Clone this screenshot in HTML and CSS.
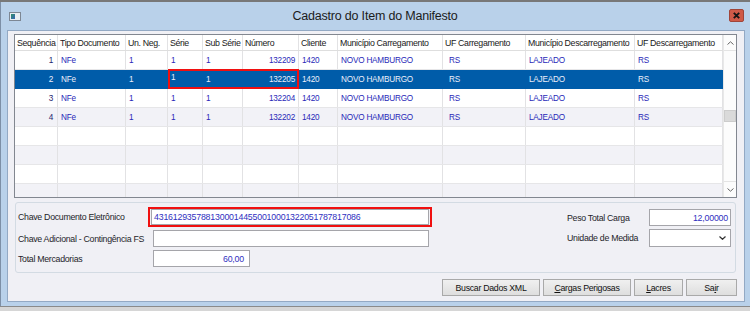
FILE: index.html
```html
<!DOCTYPE html>
<html lang="pt-BR">
<head>
    <meta charset="utf-8">
    <title>Cadastro do Item do Manifesto</title>
    <link rel="stylesheet" href="styles.css">
</head>
<body>
    <div class="topstrip"></div>
    <div class="window">
        <div class="titlebar">
            <svg class="appicon" viewBox="0 0 12 9">
                <defs>
                    <linearGradient id="ig" x1="0" y1="0" x2="1" y2="1">
                        <stop offset="0" stop-color="#2f8f6a"/>
                        <stop offset="1" stop-color="#3a64b8"/>
                    </linearGradient>
                </defs>
                <rect x="0.5" y="0.5" width="11" height="8" fill="#e9eef3" stroke="#7d8794"/>
                <rect x="2" y="2" width="4" height="5" fill="url(#ig)"/>
            </svg>
            <div class="title">Cadastro do Item do Manifesto</div>
            <div class="close">
                <svg viewBox="0 0 15 13">
                    <rect x="0.5" y="0.5" width="14" height="12" rx="1.5" fill="#cf5a48" stroke="#a0453a"/>
                    <path d="M4.8 3.8 L10.2 9.2 M10.2 3.8 L4.8 9.2" stroke="#151515" stroke-width="1.9"/>
                </svg>
            </div>
        </div>
        <div class="client">
            <div class="grid">
                <div class="cols">
                    <div class="row head">
                        <div>Sequência</div><div>Tipo Documento</div><div>Un. Neg.</div><div>Série</div><div>Sub Série</div><div>Número</div><div>Cliente</div><div>Município Carregamento</div><div>UF Carregamento</div><div>Município Descarregamento</div><div>UF Descarregamento</div>
                    </div>
                    <div class="row">
                        <div class="seq">1</div><div>NFe</div><div>1</div><div>1</div><div>1</div><div class="num">132209</div><div>1420</div><div>NOVO HAMBURGO</div><div class="uf">RS</div><div>LAJEADO</div><div>RS</div>
                    </div>
                    <div class="row sel">
                        <div class="seq">2</div><div>NFe</div><div>1</div><div class="edit">1</div><div>1</div><div class="num">132205</div><div>1420</div><div>NOVO HAMBURGO</div><div class="uf">RS</div><div>LAJEADO</div><div>RS</div>
                        <i class="redbox"></i>
                    </div>
                    <div class="row">
                        <div class="seq">3</div><div>NFe</div><div>1</div><div>1</div><div>1</div><div class="num">132204</div><div>1420</div><div>NOVO HAMBURGO</div><div class="uf">RS</div><div>LAJEADO</div><div>RS</div>
                    </div>
                    <div class="row alt">
                        <div class="seq">4</div><div>NFe</div><div>1</div><div>1</div><div>1</div><div class="num">132202</div><div>1420</div><div>NOVO HAMBURGO</div><div class="uf">RS</div><div>LAJEADO</div><div>RS</div>
                    </div>
                    <div class="row">
                        <div></div><div></div><div></div><div></div><div></div><div></div><div></div><div></div><div></div><div></div><div></div>
                    </div>
                    <div class="row alt">
                        <div></div><div></div><div></div><div></div><div></div><div></div><div></div><div></div><div></div><div></div><div></div>
                    </div>
                    <div class="row">
                        <div></div><div></div><div></div><div></div><div></div><div></div><div></div><div></div><div></div><div></div><div></div>
                    </div>
                    <div class="row alt">
                        <div></div><div></div><div></div><div></div><div></div><div></div><div></div><div></div><div></div><div></div><div></div>
                    </div>
                </div>
                <div class="vscroll">
                    <div class="sbtn up">
                        <svg viewBox="0 0 7 4"><polyline points="0.5,3.5 3.5,0.8 6.5,3.5" fill="none" stroke="#666" stroke-width="1"/></svg>
                    </div>
                    <div class="track"><div class="thumb"></div></div>
                    <div class="sbtn down">
                        <svg viewBox="0 0 7 4"><polyline points="0.5,0.5 3.5,3.2 6.5,0.5" fill="none" stroke="#666" stroke-width="1"/></svg>
                    </div>
                </div>
            </div>

            <div class="panel">
                <div class="fleft">
                    <div class="frow r1">
                        <label class="l1">Chave Documento Eletrônico</label>
                        <div class="keybox"><div class="input key">43161293578813000144550010001322051787817086</div></div>
                    </div>
                    <div class="frow">
                        <label class="l2">Chave Adicional - Contingência FS</label>
                        <div class="input adic"></div>
                    </div>
                    <div class="frow">
                        <label class="l2">Total Mercadorias</label>
                        <div class="input total num">60,00</div>
                    </div>
                </div>
                <div class="fright">
                    <div class="frow">
                        <label class="l3">Peso Total Carga</label>
                        <div class="input peso num">12,00000</div>
                    </div>
                    <div class="frow">
                        <label class="l3">Unidade de Medida</label>
                        <div class="input select">
                            <svg viewBox="0 0 7 4"><polyline points="0.5,0.5 3.5,3.3 6.5,0.5" fill="none" stroke="#333" stroke-width="1.2"/></svg>
                        </div>
                    </div>
                </div>
            </div>

            <div class="buttons">
                <div class="btn b1">Buscar Dados XML</div>
                <div class="btn b2"><u>C</u>argas Perigosas</div>
                <div class="btn b3"><u>L</u>acres</div>
                <div class="btn b4">Sa<u>i</u>r</div>
            </div>
        </div>
    </div>
    <div class="bottomstrip"></div>
</body>
</html>
```

FILE: styles.css
```css
body{
    margin: 0;
    width: 750px;
    height: 311px;
    overflow: hidden;
    background-color: rgb(207,207,207);
    font-family: "Liberation Sans", Arial, sans-serif;
    font-size: 8.8px;
    letter-spacing: -0.3px;
}
.topstrip{
    height: 2px;
    background-color: rgb(120,120,120);
}
.window{
    height: 304px;
    box-sizing: border-box;
    background-color: rgb(185,209,234);
    border-left: 1px solid rgb(125,143,166);
    padding: 0 5px 4px 6px;
    display: flex;
    flex-direction: column;
}
.titlebar{
    height: 28px;
    display: flex;
    align-items: center;
}
.appicon{
    width: 12px;
    height: 9px;
    margin-left: 2px;
}
.title{
    flex: 1;
    text-align: center;
    font-size: 12.5px;
    letter-spacing: -0.2px;
    color: rgb(27,27,27);
}
.close{
    width: 15px;
    height: 13px;
    margin: -2px 1px 0 0;
}
.close svg{
    display: block;
    width: 15px;
    height: 13px;
}
.client{
    height: 272px;
    box-sizing: border-box;
    border: 1px solid rgb(147,169,196);
    background-color: rgb(240,240,245);
    padding: 3px 7px 0 6px;
}

/* grade */
.grid{
    height: 164px;
    box-sizing: border-box;
    border: 1px solid rgb(130,135,144);
    background-color: white;
    display: flex;
    overflow: hidden;
}
.cols{
    width: 708px;
    flex: none;
}
.row{
    position: relative;
    display: grid;
    grid-template-columns: 43px 68px 42px 35px 40px 56px 39px 105px 83px 109px 88px;
    height: 19px;
    box-sizing: border-box;
    border-bottom: 1px solid rgb(230,230,232);
    color: rgb(40,40,184);
    font-size: 8.2px;
    letter-spacing: -0.2px;
}
.row > div{
    display: flex;
    align-items: center;
    padding: 0 3px;
    border-right: 1px solid rgb(226,226,228);
    white-space: nowrap;
    overflow: hidden;
}
.row.alt{
    background-color: rgb(242,242,247);
}
.row.head{
    height: 16px;
    color: rgb(26,26,26);
    font-size: 8.8px;
    letter-spacing: -0.35px;
    border-bottom-color: rgb(222,222,222);
}
.row.head > div{
    padding-left: 2px;
    padding-right: 0;
}
.row .seq{
    justify-content: flex-end;
    padding-right: 4px;
    color: rgb(30,30,110);
}
.row .num{
    justify-content: flex-end;
}
.row .uf{
    padding-left: 6px;
}
.row.sel{
    background-color: rgb(0,92,169);
    color: rgb(236,238,250);
    border-bottom-color: rgb(0,92,169);
}
.row.sel > div{
    border-right-color: transparent;
}
.row.sel .seq{
    color: rgb(240,240,255);
}
.row.sel .edit{
    align-items: flex-start;
    padding-top: 3px;
}
.redbox{
    position: absolute;
    left: 153px;
    top: -1px;
    width: 131px;
    height: 20px;
    box-sizing: border-box;
    border: 2px solid rgb(240,16,16);
}
.vscroll{
    width: 13px;
    box-sizing: border-box;
    border-left: 1px solid rgb(232,232,232);
    background-color: rgb(252,252,252);
    display: flex;
    flex-direction: column;
}
.sbtn{
    height: 16px;
    box-sizing: border-box;
    display: flex;
    align-items: center;
    justify-content: center;
}
.sbtn.up{
    border-bottom: 1px solid rgb(228,228,228);
}
.sbtn.down{
    border-top: 1px solid rgb(228,228,228);
}
.sbtn svg{
    width: 7px;
    height: 4px;
}
.track{
    flex: 1;
    padding-top: 59px;
}
.thumb{
    height: 12px;
    box-sizing: border-box;
    background-color: rgb(218,218,218);
    border: 1px solid rgb(204,204,204);
}

/* campos */
.panel{
    height: 71px;
    box-sizing: border-box;
    margin: 4px 1px 0;
    border: 1px solid rgb(211,219,227);
    border-radius: 3px;
    display: flex;
    justify-content: space-between;
    padding: 4px 4px 0 2px;
}
.frow{
    display: flex;
    align-items: center;
    height: 17px;
}
.frow + .frow{
    margin-top: 3px;
}
.frow.r1{
    height: 20px;
}
label{
    color: rgb(30,30,42);
    white-space: nowrap;
}
.l1{
    width: 130px;
}
.l2{
    width: 135px;
}
.l3{
    width: 82px;
}
.input{
    height: 17px;
    box-sizing: border-box;
    border: 1px solid rgb(165,165,170);
    background-color: white;
    color: rgb(47,47,192);
    padding: 0 2px;
    display: flex;
    align-items: center;
    white-space: nowrap;
    letter-spacing: -0.2px;
}
.input.num{
    justify-content: flex-end;
}
.keybox{
    height: 20px;
    box-sizing: border-box;
    border: 2px solid rgb(240,16,16);
    padding: 0 1px;
}
.input.key{
    width: 278px;
    height: 16px;
}
.input.adic{
    width: 276px;
}
.input.total{
    width: 97px;
    padding-right: 5px;
}
.fright{
    padding-top: 2px;
}
.input.peso{
    width: 82px;
}
.input.select{
    width: 82px;
    height: 18px;
    justify-content: flex-end;
    padding-right: 4px;
}
.select svg{
    width: 7px;
    height: 4px;
}

/* botoes */
.buttons{
    display: flex;
    justify-content: flex-end;
    gap: 3px;
    margin-top: 6px;
}
.btn{
    height: 17px;
    box-sizing: border-box;
    border: 1px solid rgb(169,169,169);
    background: linear-gradient(rgb(240,240,240), rgb(222,222,222));
    display: flex;
    align-items: center;
    justify-content: center;
    color: rgb(17,17,17);
}
.b1{ width: 98px; }
.b2{ width: 88px; }
.b3{ width: 49px; }
.b4{ width: 51px; }
.bottomstrip{
    height: 5px;
    box-sizing: border-box;
    border-top: 1px solid rgb(138,138,138);
    background-color: rgb(214,214,214);
}
```
